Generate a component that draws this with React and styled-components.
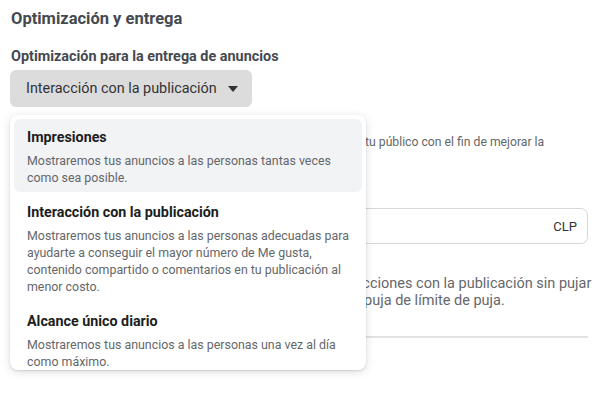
import React from "react";
import styled, { createGlobalStyle } from "styled-components";

const Global = createGlobalStyle`
  html, body { margin: 0; padding: 0; background: #fff; }
  body { font-family: Roboto, "Liberation Sans", Arial, sans-serif; -webkit-font-smoothing: antialiased; }
  * { box-sizing: border-box; }
`;

const Page = styled.div`
  width: 600px;
  height: 403px;
  overflow: hidden;
  padding: 9px 12px 0 10px;
`;

const Heading = styled.h2`
  margin: 0 0 19px 1px;
  font-size: 16.5px;
  line-height: 20px;
  font-weight: 700;
  color: #444950;
`;

const Label = styled.div`
  margin: ${(p) => p.$top || 0}px 0 4px 1px;
  font-size: 14.4px;
  line-height: 18px;
  font-weight: 700;
  color: #444950;
`;

const SelectWrap = styled.div`
  position: relative;
  display: inline-block;
`;

const SelectButton = styled.button`
  display: inline-flex;
  align-items: center;
  gap: 11px;
  height: 37px;
  padding: 0 14px 0 16px;
  border: none;
  border-radius: 6px;
  background: #dcdcdd;
  font-family: inherit;
  font-size: 14.4px;
  color: #333;
  cursor: pointer;
`;

const Help = styled.p`
  margin: ${(p) => p.$top}px 0 0 1px;
  font-size: ${(p) => p.$size}px;
  line-height: 17px;
  color: #65676b;
  white-space: nowrap;
`;

const InputBox = styled.div`
  display: flex;
  align-items: center;
  justify-content: flex-end;
  height: 36px;
  padding: 0 10px;
  border: 1px solid #d5d7da;
  border-radius: 7px;
  font-size: 13px;
  color: #333;
`;

const Divider = styled.hr`
  margin: 27px 0 0;
  border: none;
  border-top: 2px solid #e2e2e2;
`;

const Menu = styled.div`
  position: absolute;
  top: 45px;
  left: 0;
  width: 356px;
  height: 255px;
  overflow: hidden;
  padding: 4px;
  display: flex;
  flex-direction: column;
  gap: 2px;
  background: #fff;
  border-radius: 8px;
  box-shadow: 0 2px 10px rgba(0, 0, 0, 0.13), 0 1px 2px rgba(0, 0, 0, 0.12);
  z-index: 2;
`;

const Item = styled.div`
  padding: 9px 8px 6px 13px;
  border-radius: 6px;
  background: ${(p) => (p.$active ? "#f2f3f5" : "transparent")};
`;

const ItemTitle = styled.div`
  font-size: 14.3px;
  line-height: 18px;
  font-weight: 700;
  color: #1c1e21;
`;

const ItemDesc = styled.div`
  margin-top: 6px;
  font-size: 12.4px;
  line-height: 17px;
  color: #65676b;
  white-space: nowrap;
`;

const Caret = () => (
  <svg width="10" height="6" viewBox="0 0 10 6" aria-hidden="true">
    <path d="M0 0h10L5 6z" fill="#333" />
  </svg>
);

const options = [
  {
    title: "Impresiones",
    lines: ["Mostraremos tus anuncios a las personas tantas veces", "como sea posible."],
    active: true,
  },
  {
    title: "Interacción con la publicación",
    lines: [
      "Mostraremos tus anuncios a las personas adecuadas para",
      "ayudarte a conseguir el mayor número de Me gusta,",
      "contenido compartido o comentarios en tu publicación al",
      "menor costo.",
    ],
  },
  {
    title: "Alcance único diario",
    lines: ["Mostraremos tus anuncios a las personas una vez al día", "como máximo."],
  },
];

export default function App() {
  return (
    <>
      <Global />
      <Page>
        <Heading>Optimización y entrega</Heading>
        <Label>Optimización para la entrega de anuncios</Label>
        <SelectWrap>
          <SelectButton>
            Interacción con la publicación
            <Caret />
          </SelectButton>
          <Menu>
            {options.map((o) => (
              <Item key={o.title} $active={o.active}>
                <ItemTitle>{o.title}</ItemTitle>
                <ItemDesc>
                  {o.lines.map((l, i) => (
                    <React.Fragment key={i}>
                      {i > 0 && <br />}
                      {l}
                    </React.Fragment>
                  ))}
                </ItemDesc>
              </Item>
            ))}
          </Menu>
        </SelectWrap>
        <Help $top={27} $size={12.2}>
          Mostraremos tus anuncios a las personas adecuadas que hay en tu público con el fin de mejorar la
          <br />
          interacción con tu publicación.
        </Help>
        <Label $top={18}>Límite de costo</Label>
        <InputBox>CLP</InputBox>
        <Help $top={31} $size={14.5}>
          Con esta opción obtendrás la mayor cantidad de interacciones con la publicación sin pujar
          <br />
          Esa estrategia es ideal si todavía no prefieres usar una puja de límite de puja.
        </Help>
        <Divider />
      </Page>
    </>
  );
}
